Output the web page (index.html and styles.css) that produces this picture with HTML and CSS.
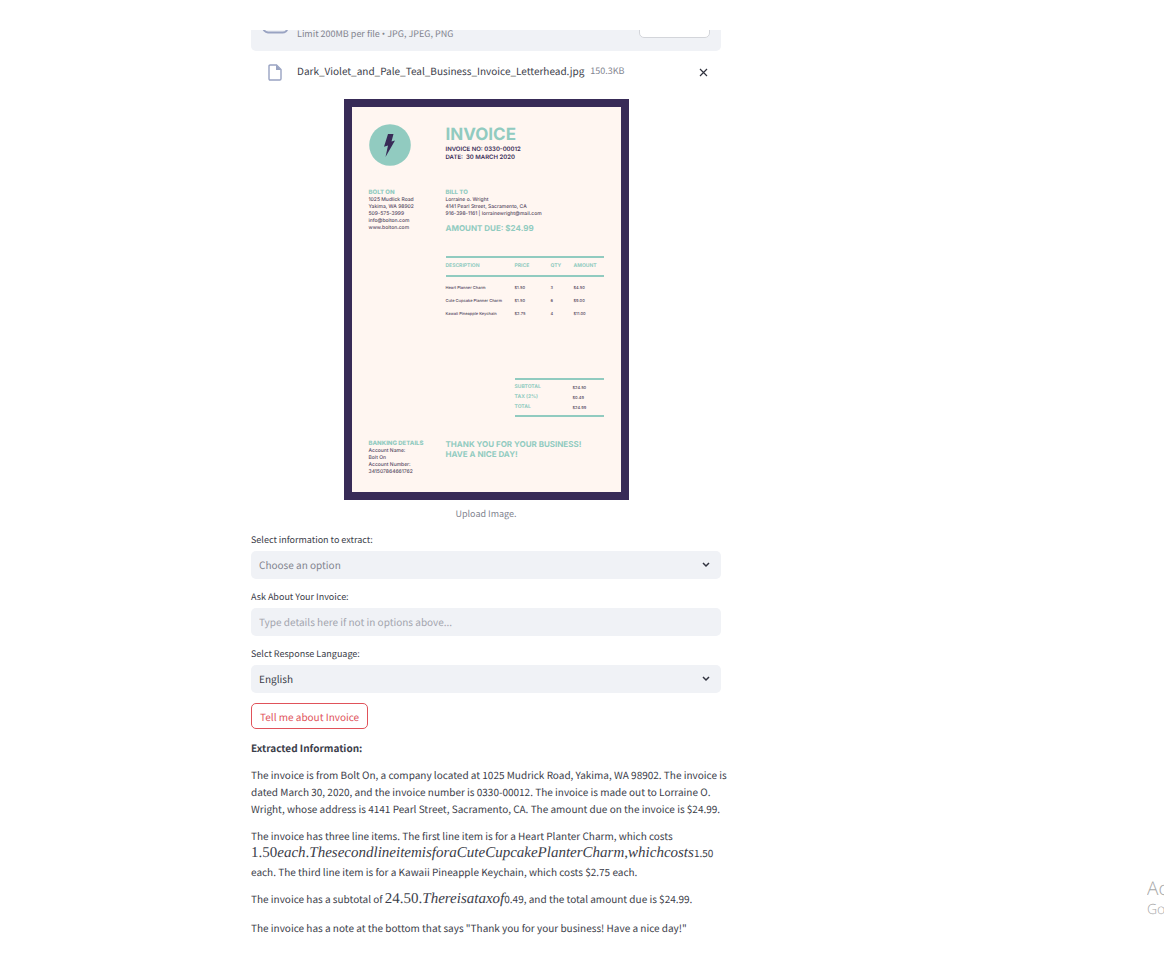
FILE: index.html
```html
<!DOCTYPE html>
<html lang="en">
<head>
<meta charset="utf-8">
<meta name="viewport" content="width=device-width, initial-scale=1">
<title>Invoice Extractor</title>
<link rel="stylesheet" href="styles.css">
</head>
<body>
<div class="app">
  <main class="content">
    <section class="uploader">
      <svg class="cloud" viewBox="0 0 26 20" aria-hidden="true"><path d="M6 18.500h14a5 5 0 0 0 1-10A8 8 0 0 0 6 7a5.800 5.800 0 0 0 0 11.500z"/></svg>
      <span class="limit">Limit 200MB per file <span class="dot">•</span> JPG, JPEG, PNG</span>
      <button class="browse" type="button" aria-label="Browse"></button>
    </section>

    <div class="file">
      <svg class="file-icon" viewBox="0 0 14 17" aria-hidden="true"><path d="M1 2.200Q1 1 2.200 1H8.500L13 5.500V14.800Q13 16 11.800 16H2.200Q1 16 1 14.800z"/><path class="fold" d="M8 1V6H13z"/></svg>
      <span class="file-name">Dark_Violet_and_Pale_Teal_Business_Invoice_Letterhead.jpg</span>
      <span class="file-size">150.3KB</span>
      <button class="remove" type="button" aria-label="Remove file"><svg viewBox="0 0 9 9"><path d="M1 1l7 7M8 1L1 8"/></svg></button>
    </div>

    <figure class="preview">
      <article class="invoice">
        <header class="split head">
          <svg class="bolt" viewBox="0 0 42 42" aria-hidden="true"><circle cx="21" cy="21" r="20.800"/><path d="M19 10h5.500l-2 7.500 3.500-1-9.500 16.500 2.500-11.500-4 1.300z"/></svg>
          <div>
            <h1>INVOICE</h1>
            <p class="meta">INVOICE NO: 0330-00012</p>
            <p class="meta">DATE:&nbsp; 30 MARCH 2020</p>
          </div>
        </header>
        <section class="split parties">
          <div>
            <h2>BOLT ON</h2>
            <p>1025 Mudlick Road</p><p>Yakima, WA 98902</p><p>509-575-3999</p><p>info@bolton.com</p><p>www.bolton.com</p>
          </div>
          <div>
            <h2>BILL TO</h2>
            <p>Lorraine o. Wright</p><p>4141 Pearl Street, Sacramento, CA</p><p>916-398-1161 | lorrainewright@mail.com</p>
            <h3 class="due">AMOUNT DUE: $24.99</h3>
          </div>
        </section>
        <table class="items">
          <colgroup><col class="c-desc"><col class="c-price"><col class="c-qty"><col></colgroup>
          <thead><tr><th>DESCRIPTION</th><th>PRICE</th><th>QTY</th><th>AMOUNT</th></tr></thead>
          <tbody>
            <tr><td>Heart Planner Charm</td><td>$1.50</td><td>3</td><td>$4.50</td></tr>
            <tr><td>Cute Cupcake Planner Charm</td><td>$1.50</td><td>6</td><td>$9.00</td></tr>
            <tr><td>Kawaii Pineapple Keychain</td><td>$2.75</td><td>4</td><td>$11.00</td></tr>
          </tbody>
        </table>
        <table class="totals">
          <tbody>
            <tr><th>SUBTOTAL</th><td>$24.50</td></tr>
            <tr><th>TAX (2%)</th><td>$0.49</td></tr>
            <tr><th>TOTAL</th><td>$24.99</td></tr>
          </tbody>
        </table>
        <footer class="split">
          <div>
            <h2>BANKING DETAILS</h2>
            <p>Account Name:</p><p>Bolt On</p><p>Account Number:</p><p>341507864661762</p>
          </div>
          <h3>THANK YOU FOR YOUR BUSINESS!<br>HAVE A NICE DAY!</h3>
        </footer>
      </article>
      <figcaption>Upload Image.</figcaption>
    </figure>

    <form class="form">
      <label for="info">Select information to extract:</label>
      <div class="select muted">
        <select id="info"><option>Choose an option</option></select>
        <svg class="chevron" viewBox="0 0 8 6" aria-hidden="true"><path d="M1 1l3 3 3-3"/></svg>
      </div>
      <label for="ask">Ask About Your Invoice:</label>
      <input id="ask" class="field" type="text" placeholder="Type details here if not in options above...">
      <label for="lang">Selct Response Language:</label>
      <div class="select">
        <select id="lang"><option>English</option></select>
        <svg class="chevron" viewBox="0 0 8 6" aria-hidden="true"><path d="M1 1l3 3 3-3"/></svg>
      </div>
      <button class="submit" type="button">Tell me about Invoice</button>
    </form>

    <section class="answer">
      <p><strong>Extracted Information:</strong></p>
      <p>The invoice is from Bolt On, a company located at 1025 Mudrick Road, Yakima, WA 98902. The invoice is dated March 30, 2020, and the invoice number is 0330-00012. The invoice is made out to Lorraine O. Wright, whose address is 4141 Pearl Street, Sacramento, CA. The amount due on the invoice is $24.99.</p>
      <p>The invoice has three line items. The first line item is for a Heart Planter Charm, which costs <span class="math">1.50<i>each</i>.<i>ThesecondlineitemisforaCuteCupcakePlanterCharm</i>,<i>whichcosts</i></span>1.50 each. The third line item is for a Kawaii Pineapple Keychain, which costs $2.75 each.</p>
      <p>The invoice has a subtotal of <span class="math">24.50.<i>Thereisataxof</i></span>0.49, and the total amount due is $24.99.</p>
      <p>The invoice has a note at the bottom that says "Thank you for your business! Have a nice day!"</p>
    </section>
  </main>
  <aside class="watermark"><p class="big">Ac</p><p>Go</p></aside>
</div>
</body>
</html>
```
FILE: styles.css
```css
* { box-sizing: border-box; }
body, h1, h2, h3, p, figure { margin: 0; }
body {
  background: #fff;
  color: #3b3d49;
  font: 10px/17px "Noto Sans CJK SC", "Noto Sans", sans-serif;
  text-rendering: geometricPrecision;
}
button, input, select { font: inherit; color: inherit; text-rendering: inherit; }

.app {
  position: relative;
  min-height: 100vh;
  padding: 30px 192px 24px 0;
  overflow: hidden;
}
.content { max-width: 470px; margin: 0 auto; }

.uploader {
  display: flex;
  align-items: flex-end;
  height: 21px;
  padding: 0 11px;
  overflow: hidden;
  background: #f0f2f6;
  border-radius: 0 0 5px 5px;
}
.cloud { width: 26px; height: 20px; margin-bottom: 17px; fill: none; stroke: #99a3c2; stroke-width: 2; }
.limit { margin: 0 auto 9px 9px; color: #82848f; font-size: 9px; }
.dot { font-family: "Open Sans", sans-serif; line-height: 1; }
.browse { width: 71px; height: 28px; margin-bottom: 13px; background: #fff; border: 1px solid #d3d5da; border-radius: 5px; flex-shrink: 0; }

.file { display: flex; align-items: center; height: 42px; padding: 0 12px 0 17px; }
.file-icon { width: 14px; height: 17px; fill: none; stroke: #99a3c2; stroke-width: 1.400; }
.file-icon .fold { fill: #99a3c2; stroke: none; }
.file-name { margin: 0 6px 4px 15px; }
.file-size { margin-bottom: 4px; color: #82848f; font-size: 9px; }
.remove { display: flex; margin-left: auto; padding: 1px; background: none; border: 0; }
.remove svg { width: 9px; height: 9px; stroke: #31333f; stroke-width: 1.200; }

/* Invoice preview */
.preview { padding-top: 6px; }
.invoice {
  width: 285px;
  margin: 0 auto;
  padding: 16px 17px;
  background: #fff6f1;
  border: 8px solid #382b57;
  color: #55495f;
  font: 500 5px/7px Inter, "Open Sans", sans-serif;
}
.split { display: grid; grid-template-columns: 77px 1fr; white-space: nowrap; }
.invoice h1, .invoice h2, .invoice h3, .invoice th { color: #91cbc0; font-weight: 700; }
.invoice h1 { font-size: 17px; line-height: 22px; }
.invoice h2 { font-size: 6px; font-weight: 800; line-height: 9px; }
.invoice h3 { font-size: 8px; line-height: 10px; }
.meta { color: #382b57; font-size: 6px; line-height: 8px; font-weight: 600; }
.bolt { width: 42px; height: 42px; fill: #91cbc0; }
.bolt path { fill: #382b57; }
.head { padding-top: 1px; margin-bottom: 22px; }
.invoice .due { margin-top: 5px; }
.items, .totals { border-collapse: collapse; table-layout: fixed; font-size: 4px; line-height: 5px; white-space: nowrap; }
.items { width: 158px; margin: 23px 0 0 77px; }
.items th, .items td, .totals th, .totals td { padding: 0; text-align: left; }
.items thead th { height: 19px; border-top: 2px solid #91cbc0; border-bottom: 2px solid #91cbc0; font-size: 5px; }
.items td { height: 13px; }
.items tbody::before { content: ""; display: block; height: 4px; }
.c-desc { width: 69px; }
.c-price { width: 36px; }
.c-qty { width: 23px; }
.totals { width: 89px; margin: 58px 0 22px 146px; border-top: 2px solid #91cbc0; border-bottom: 2px solid #91cbc0; }
.totals th { width: 58px; height: 10px; font-size: 5px; }
.totals tr:first-child > * { height: 13px; padding-top: 3px; }
.totals tr:last-child > * { height: 14px; padding-bottom: 3px; }
.preview figcaption { margin-top: 5px; color: #82848f; font-size: 9px; text-align: center; }

/* Question form */
.form { padding-top: 11px; }
.form label { display: block; height: 18px; margin-top: 11px; font-size: 9px; line-height: 14px; }
.form label:first-child { margin-top: 0; }
.select { position: relative; }
.select select, .field {
  display: block;
  width: 100%;
  height: 28px;
  padding: 0 8px 2px;
  background: #f0f2f6;
  border: 0;
  border-radius: 5px;
  appearance: none;
}
.muted select { color: #82848f; }
.field::placeholder { color: #a3a5ae; opacity: 1; }
.chevron { position: absolute; top: 11px; right: 11px; width: 8px; height: 6px; fill: none; stroke: #31333f; stroke-width: 1.500; pointer-events: none; }
.submit { display: block; height: 26px; margin-top: 10px; padding: 0 8px; background: #fff; border: 1px solid #e0525a; border-radius: 5px; color: #e0525a; }

/* Generated answer */
.answer { display: grid; gap: 10px; margin-right: -8px; padding-top: 10px; }
.math { font: 15px/19px "Liberation Serif", serif; }

.watermark { position: absolute; top: 876px; right: 0; width: 17px; overflow: hidden; color: #a8a8a8; font: 300 14px/20px "Open Sans", sans-serif; }
.watermark .big { font-size: 19px; line-height: 24px; }
```
